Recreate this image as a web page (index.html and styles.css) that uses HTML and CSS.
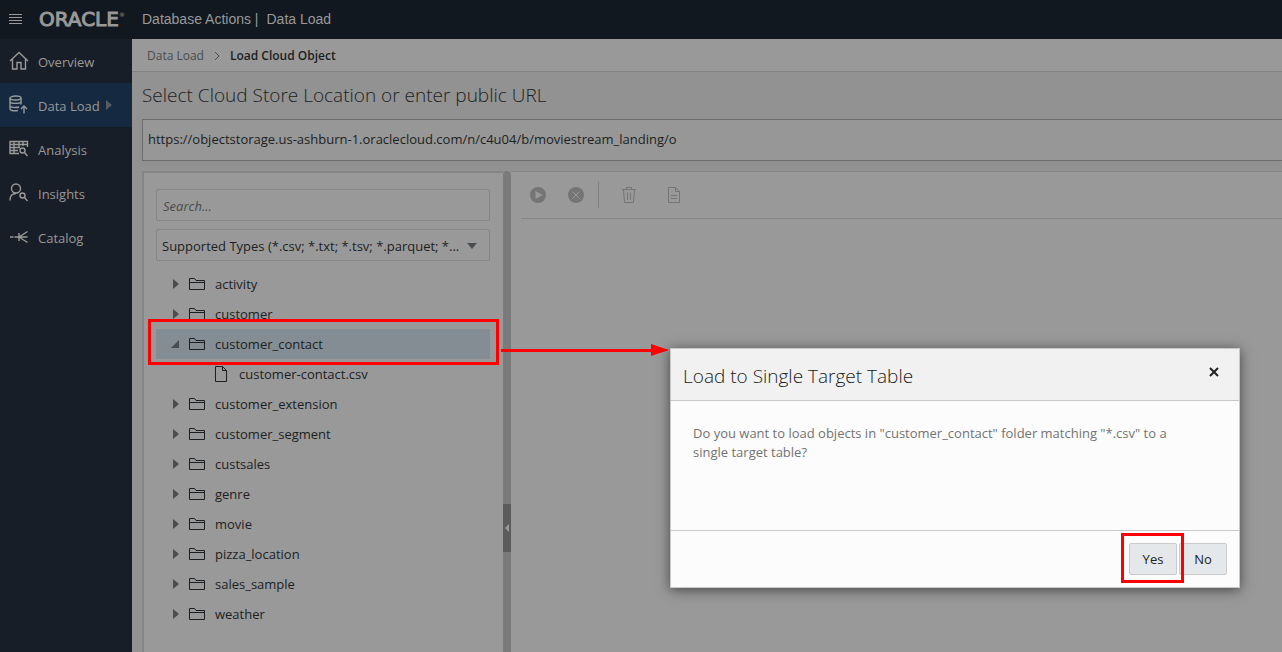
FILE: index.html
```html
<!DOCTYPE html>
<html lang="en">
<head>
<meta charset="utf-8">
<title>Database Actions | Data Load</title>
<link rel="stylesheet" href="styles.css">
</head>
<body>
<svg class="sprite" aria-hidden="true">
  <symbol id="folder" viewBox="0 0 18 14"><path d="M1.500 12.500V1.500H6.500L8 3.500H16.500V12.500ZM1.500 5.500H16.500"/></symbol>
</svg>
<header class="topbar">
  <button class="menu" aria-label="Menu"><svg width="14" height="12" viewBox="0 0 14 12"><path d="M1 1.500H14M1 4.500H14M1 7.500H14M1 10.500H14"/></svg></button>
  <span class="logo">ORACLE<sup>®</sup></span>
  <span class="product">Database Actions |</span>
  <span class="product">Data Load</span>
</header>
<div class="shell">
  <nav class="side">
    <a href="#" class="nav"><svg viewBox="0 0 20 20"><path d="M1 10L10 1.500L19 10M3.500 8V18H8V11.500H12V18H16.500V8"/></svg>Overview</a>
    <a href="#" class="nav active"><svg viewBox="0 0 20 20"><ellipse cx="6.500" cy="3" rx="5.500" ry="2"/><path d="M1 3V14C1 15.500 4 16 9 15.500M12 3V9.500M1 6.500C1 9 12 9 12 6.500M1 10.500C1 12.500 7 13 10 12M15 18.500V11M12 14L15 11L18 14"/></svg>Data Load<i class="caret"></i></a>
    <a href="#" class="nav"><svg viewBox="0 0 20 20"><path d="M10 14.500H1V2.500H18.500V8M1 5.500H18.500M1 8.500H11M1 11.500H9M5 2.500V14.500M10 2.500V9M14 2.500V7M15.500 13.500L18.500 17"/><circle cx="13.500" cy="11.500" r="2.500"/></svg>Analysis</a>
    <a href="#" class="nav"><svg viewBox="0 0 20 20"><circle cx="7" cy="5.500" r="4.500"/><path d="M1 17.500C1 13 3.500 10.500 7 10.500M15.500 14.500L18.500 18"/><circle cx="13.500" cy="12.500" r="2.500"/></svg>Insights</a>
    <a href="#" class="nav"><svg viewBox="0 0 20 20"><path d="M1 10H4.500M5.500 10H18.500M10 10L18.500 4.500M10 10L18.500 15.500M10 6V14"/></svg>Catalog</a>
  </nav>
  <main class="main">
    <div class="crumbs"><a href="#">Data Load</a><svg width="6" height="10" viewBox="0 0 6 10"><path d="M1 1L5 5L1 9"/></svg><strong>Load Cloud Object</strong></div>
    <label class="title" for="url">Select Cloud Store Location or enter public URL</label>
    <input class="url" id="url" type="text" value="https://objectstorage.us-ashburn-1.oraclecloud.com/n/c4u04/b/moviestream_landing/o">
    <div class="panes">
      <section class="browser">
        <input class="field search" type="text" placeholder="Search..." aria-label="Search">
        <div class="field types"><select aria-label="File types"><option>Supported Types (*.csv; *.txt; *.tsv; *.parquet; *...</option></select></div>
        <ul class="tree">
          <li class="row"><i class="caret"></i><svg><use href="#folder"/></svg>activity</li>
          <li class="row"><i class="caret"></i><svg><use href="#folder"/></svg>customer</li>
          <li class="row selected"><i class="caret open"></i><svg><use href="#folder"/></svg>customer_contact</li>
          <li class="row file"><svg viewBox="0 0 14 18"><path d="M1.500 1.500H8.500L12.500 5.500V16.500H1.500ZM8.500 1.500V5.500H12.500"/></svg>customer-contact.csv</li>
          <li class="row"><i class="caret"></i><svg><use href="#folder"/></svg>customer_extension</li>
          <li class="row"><i class="caret"></i><svg><use href="#folder"/></svg>customer_segment</li>
          <li class="row"><i class="caret"></i><svg><use href="#folder"/></svg>custsales</li>
          <li class="row"><i class="caret"></i><svg><use href="#folder"/></svg>genre</li>
          <li class="row"><i class="caret"></i><svg><use href="#folder"/></svg>movie</li>
          <li class="row"><i class="caret"></i><svg><use href="#folder"/></svg>pizza_location</li>
          <li class="row"><i class="caret"></i><svg><use href="#folder"/></svg>sales_sample</li>
          <li class="row"><i class="caret"></i><svg><use href="#folder"/></svg>weather</li>
        </ul>
      </section>
      <div class="splitter"><button class="handle" aria-label="Collapse"></button></div>
      <section class="jobs">
        <div class="toolbar">
          <button aria-label="Start"><svg width="16" height="16" viewBox="0 0 16 16"><circle class="solid" cx="8" cy="8" r="8"/><path class="cut" d="M5.500 4L12.500 8L5.500 12Z"/></svg></button>
          <button aria-label="Stop"><svg width="16" height="16" viewBox="0 0 16 16"><circle class="solid" cx="8" cy="8" r="8"/><path class="cross" d="M4.500 4.500L11.500 11.500M11.500 4.500L4.500 11.500"/></svg></button>
          <span class="rule"></span>
          <button aria-label="Delete"><svg width="14" height="16" viewBox="0 0 14 16"><path d="M0 2.500H14M4.500 2.500V.5H9.500V2.500M1.500 3L2.500 15.500H11.500L12.500 3M5.500 5.500V13M8.500 5.500V13"/></svg></button>
          <button aria-label="Report"><svg width="14" height="16" viewBox="0 0 14 16"><path d="M1.500 .5H8.500L12.500 4.500V15.500H1.500ZM8.500 .5V4.500H12.500M4 8.500H10M4 11.500H10"/></svg></button>
        </div>
      </section>
    </div>
  </main>
</div>
<svg class="arrow" viewBox="0 0 168 12" aria-hidden="true"><path d="M0 6.500H152" stroke="#f00" stroke-width="3"/><path d="M150 0L168 6L150 12Z" fill="#f00" stroke="none"/></svg>
<div class="dialog" role="dialog" aria-labelledby="dlg">
  <div class="dialog-head"><h2 id="dlg">Load to Single Target Table</h2><button class="close" aria-label="Close"><svg width="10" height="10" viewBox="0 0 10 10"><path d="M1 1L9 9M9 1L1 9"/></svg></button></div>
  <p class="dialog-body">Do you want to load objects in "customer_contact" folder matching "*.csv" to a single target table?</p>
  <div class="dialog-foot"><button class="btn marked">Yes</button><button class="btn">No</button></div>
</div>
</body>
</html>
```
FILE: styles.css
```css
* { box-sizing: border-box; }
body {
  margin: 0;
  height: 100vh;
  display: flex;
  flex-direction: column;
  overflow: hidden;
  background: #929292;
  color: #1c1f22;
  font: 13px/20px "Open Sans", "Noto Sans", sans-serif;
}
button, input, select { font: inherit; color: inherit; margin: 0; padding: 0; border: 0; background: none; }
a { color: inherit; text-decoration: none; }
svg { fill: none; stroke: currentColor; flex: none; display: block; }
.sprite { position: absolute; width: 0; height: 0; }

.topbar {
  height: 39px;
  flex: none;
  display: flex;
  align-items: center;
  padding: 0 0 2px 8px;
  background: #11181f;
  color: #999;
  font: 14px/20px "Liberation Sans", Arial, sans-serif;
}
.menu { width: 31px; }
.logo { width: 103px; font: 20px/20px "DejaVu Sans", sans-serif; white-space: nowrap; -webkit-text-stroke: 1px #999; }
.logo sup { font-size: 6px; line-height: 0; vertical-align: 9px; -webkit-text-stroke: 0; }
.product { margin-right: 8px; }

.shell { flex: 1; min-height: 0; display: flex; }
.side { width: 132px; flex: none; background: #181e27; color: #999; }
.nav { height: 44px; display: flex; align-items: center; gap: 9px; padding: 2px 0 0 9px; }
.nav svg { width: 20px; height: 20px; stroke-width: 1.4; margin-top: -2px; }
.nav.active { background: #152a40; }
.nav .caret { margin: -2px 0 0 -3px; border-left-color: #575c62; }
.caret { border: solid transparent; border-width: 5px 0 5px 6px; border-left-color: #4a4d50; }
.caret.open { border-width: 0 0 8px 8px; border-left-color: transparent; border-bottom-color: #4a4d50; margin-left: -2px; }

.main { flex: 1; min-width: 0; display: flex; flex-direction: column; }
.crumbs {
  height: 33px;
  flex: none;
  display: flex;
  align-items: center;
  gap: 10px;
  padding: 2px 0 0 15px;
  background: #999;
  border-bottom: 1px solid #828282;
  color: #4c4c4c;
  font-size: 12px;
}
.crumbs strong { font-weight: 600; color: #1c1f22; }
.title { padding: 10px 0 11px 10px; font-size: 19px; line-height: 26px; font-weight: 300; }
.url {
  height: 42px;
  flex: none;
  margin-left: 10px;
  padding: 0 0 2px 5px;
  border: 1px solid #6d6d6d;
  border-right: 0;
  background: #979797;
  box-shadow: 0 2px 6px #8686864d;
}
.panes { flex: 1; min-height: 0; display: flex; margin: 10px 0 0 10px; }
.browser {
  width: 361px;
  flex: none;
  padding: 16px 11px 0 12px;
  background: #999;
  border: solid #858585;
  border-width: 2px 0 0 2px;
}
.field { width: 334px; height: 32px; border: 1px solid #868686; border-radius: 2px; padding: 0 6px; }
.search { display: block; padding-top: 2px; font-style: italic; }
.search::placeholder { color: #4c4c4c; opacity: 1; }
.types { position: relative; margin: 8px 0; padding: 0 10px 0 5px; }
.types select { width: 100%; height: 30px; padding-top: 2px; appearance: none; }
.types::after {
  content: "";
  position: absolute;
  right: 12px;
  top: 13px;
  border: solid transparent;
  border-width: 6px 5px 0;
  border-top-color: #4a4d50;
  pointer-events: none;
}
.tree { width: 334px; list-style: none; margin: 0; padding: 0; }
.row { position: relative; height: 30px; display: flex; align-items: center; padding-left: 17px; }
.row svg { width: 18px; height: 14px; margin: 0 9px; }
.row.file { padding-left: 49px; }
.row.file svg { width: 14px; height: 18px; margin: 0 11px 0 9px; }
.row.selected { background: #848d94; }
.row.selected::after, .marked::after { content: ""; position: absolute; border: 3px solid #f00; pointer-events: none; }
.row.selected::after { inset: -10px -9px -6px -8px; }

.splitter { width: 8px; flex: none; display: flex; flex-direction: column; justify-content: flex-end; padding-bottom: 100px; background: #7b7b7b; border-radius: 4px 4px 0 0; }
.handle { height: 48px; display: flex; align-items: center; justify-content: center; background: #5c5c5c; }
.handle::after { content: ""; border: solid transparent; border-width: 4px 4px 4px 0; border-right-color: #999; }
.jobs { flex: 1; min-width: 0; padding-left: 10px; background: #999; border-top: 1px solid #858585; }
.toolbar { height: 47px; display: flex; align-items: center; border-bottom: 1px solid #858585; color: #757575; padding-left: 9px; }
.toolbar button + button { margin-left: 22px; }
.toolbar .rule { width: 1px; height: 26px; background: #818181; margin: 0 23px 0 14px; }
.toolbar .rule + button + button { margin-left: 31px; }
.solid { fill: #757575; stroke: none; }
.cut { fill: #999; stroke: none; }
.cross { stroke: #999; }

.arrow { position: absolute; left: 501px; top: 344px; width: 168px; height: 12px; }
.dialog {
  position: absolute;
  right: 42px;
  top: 348px;
  width: 570px;
  display: flex;
  flex-direction: column;
  background: #fcfcfc;
  border: 1px solid #c8c8c8;
  box-shadow: 0 2px 12px #0000008c;
}
.dialog-head { height: 52px; display: flex; align-items: center; justify-content: space-between; padding: 0 20px 0 12px; background: #f1f1f1; border-bottom: 1px solid #c8c8c8; }
.dialog-head h2 { margin: 2px 0 0; font-size: 19px; line-height: 26px; font-weight: 300; color: #222; }
.close { color: #222; padding-bottom: 5px; }
.close svg { stroke-width: 2; }
.dialog-body { margin: 0; min-height: 129px; padding: 23px 50px 0 22px; line-height: 19px; color: #737373; }
.dialog-foot { display: flex; justify-content: flex-end; gap: 2px; padding: 12px; border-top: 1px solid #c8c8c8; }
.btn { position: relative; height: 32px; width: 48px; background: #e4e8eb; border: 1px solid #c8cacc; border-radius: 2px; color: #222; }
.marked::after { inset: -11px -8px -9px -9px; z-index: 1; }
```
